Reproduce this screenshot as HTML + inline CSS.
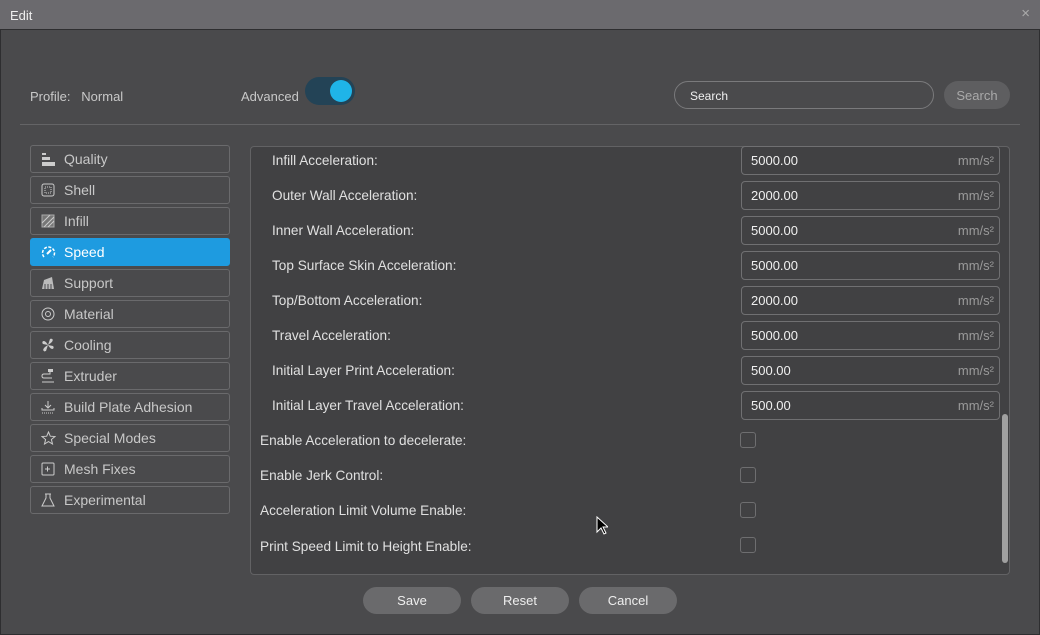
<!DOCTYPE html>
<html><head><style>
*{box-sizing:border-box;margin:0;padding:0}
body{width:1040px;height:635px;background:#4a4a4c;font-family:"Liberation Sans",sans-serif;font-size:13px;color:#d8d8d8;position:relative;overflow:hidden}
.a{position:absolute}
.title{left:0;top:0;width:1040px;height:30px;background:#6b6a6e;border-bottom:1px solid #2e2e30;color:#eee;font-size:13px;padding:8px 10px}
.nav{left:30px;width:200px;height:28px;border:1px solid #6a6a6c;border-radius:3px;color:#c8c8c8;font-size:14px;padding:5px 0 0 33px}
.nav svg{position:absolute;left:10px;top:6px}
.nav.sel{background:#1e9be0;border-color:#1e9be0;color:#fff}
.panel{left:250px;top:146px;width:760px;height:429px;background:#414143;border:1px solid #626264;border-radius:4px}
.lbl{font-size:13.6px;color:#e0e0e0}
.inp{left:741px;width:259px;height:29px;border:1px solid #707072;border-radius:4px;color:#f0f0f0;font-size:13px;padding:6px 9px}
.inp span{position:absolute;right:5px;top:6px;color:#9a9a9a}
.cb{left:740px;width:16px;height:16px;border:1px solid #6e6e70;border-radius:3px}
.btn{top:587px;width:98px;height:27px;border-radius:14px;background:#6a6a6c;color:#eee;text-align:center;padding-top:6px;font-size:13px}
</style></head><body>
<div class="a" style="left:0;top:0;width:1040px;height:635px;border:1px solid #2e2e30;border-top:0"></div>
<div class="a title">Edit<span style="position:absolute;right:10px;top:5px;color:#aaa;font-size:15px">×</span></div>
<div class="a" style="left:30px;top:89px;color:#c8c8c8">Profile:&nbsp;&nbsp; Normal</div>
<div class="a" style="left:241px;top:89px;color:#c8c8c8">Advanced</div>
<div class="a" style="left:305px;top:77px;width:50px;height:28px;border-radius:14px;background:#234356"><div class="a" style="left:25px;top:3px;width:22px;height:22px;border-radius:50%;background:#1fb4e8"></div></div>
<div class="a" style="left:674px;top:81px;width:260px;height:28px;border:1px solid #7a7a7c;border-radius:14px;color:#f0f0f0;padding:7px 15px;font-size:12px">Search</div>
<div class="a" style="left:944px;top:81px;width:66px;height:28px;border-radius:14px;background:#5e5e60;color:#aaa;text-align:center;padding-top:7px">Search</div>
<div class="a" style="left:20px;top:124px;width:1000px;height:1px;background:#646466"></div>

<div class="a nav" style="top:145px"><svg width="14" height="14"><rect x="1" y="1" width="4" height="2" fill="#ccc"/><rect x="1" y="5" width="8" height="3" fill="#ccc"/><rect x="1" y="10" width="13" height="4" fill="#ccc"/></svg>Quality</div>
<div class="a nav" style="top:176px"><svg width="14" height="14"><rect x="1" y="1" width="12" height="12" rx="2" fill="none" stroke="#ccc"/><rect x="4" y="4" width="6" height="6" fill="none" stroke="#ccc" stroke-dasharray="1 1"/></svg>Shell</div>
<div class="a nav" style="top:207px"><svg width="14" height="14"><rect x="1" y="1" width="12" height="12" fill="#777" stroke="#aaa"/><path d="M1 9L9 1M3 13L13 3M7 13L13 7" stroke="#ccc"/></svg>Infill</div>
<div class="a nav sel" style="top:238px"><svg width="15" height="14"><path d="M3 12A6 6 0 1 1 12 12" fill="none" stroke="#fff" stroke-width="1.5" stroke-dasharray="3 1.5"/><path d="M6 9L10 5" stroke="#fff" stroke-width="2"/></svg>Speed</div>
<div class="a nav" style="top:269px"><svg width="14" height="14"><path d="M1 13L3 4L11 1L13 13Z" fill="#bbb"/><path d="M4 13V8M7 13V8M10 13V8" stroke="#4a4a4c"/></svg>Support</div>
<div class="a nav" style="top:300px"><svg width="14" height="14"><circle cx="7" cy="7" r="6" fill="none" stroke="#ccc"/><circle cx="7" cy="7" r="2.5" fill="none" stroke="#ccc"/></svg>Material</div>
<div class="a nav" style="top:331px"><svg width="14" height="14"><path d="M7 7C3 0 0 4 2 6ZM7 7C14 3 12 0 9 1ZM7 7C11 14 14 10 12 8ZM7 7C0 11 2 14 5 13Z" fill="#ccc"/></svg>Cooling</div>
<div class="a nav" style="top:362px"><svg width="14" height="14"><rect x="7" y="0" width="5" height="3" fill="#ccc"/><path d="M9 3V5H3Q1 5 1 7Q1 9 3 9H11M1 13H13" fill="none" stroke="#ccc"/></svg>Extruder</div>
<div class="a nav" style="top:393px"><svg width="14" height="14"><path d="M7 1V8M4 5L7 8L10 5M1 8V10H13V8" fill="none" stroke="#ccc"/><path d="M1 13H13" stroke="#ccc" stroke-dasharray="1 1"/></svg>Build Plate Adhesion</div>
<div class="a nav" style="top:424px"><svg width="15" height="14"><path d="M7.5 1L9.3 5.2L14 5.5L10.4 8.5L11.5 13L7.5 10.6L3.5 13L4.6 8.5L1 5.5L5.7 5.2Z" fill="none" stroke="#ccc"/></svg>Special Modes</div>
<div class="a nav" style="top:455px"><svg width="14" height="14"><rect x="1" y="1" width="12" height="12" rx="1" fill="none" stroke="#ccc"/><path d="M4 7H9M6.5 4.5V9.5" stroke="#ccc"/></svg>Mesh Fixes</div>
<div class="a nav" style="top:486px"><svg width="14" height="14"><path d="M4 1H10M5 1V5L1 13H13L9 5V1" fill="none" stroke="#ccc"/></svg>Experimental</div>

<div class="a panel"></div>
<div class="a lbl" style="left:272px;top:153px">Infill Acceleration:</div>
<div class="a lbl" style="left:272px;top:188px">Outer Wall Acceleration:</div>
<div class="a lbl" style="left:272px;top:223px">Inner Wall Acceleration:</div>
<div class="a lbl" style="left:272px;top:258px">Top Surface Skin Acceleration:</div>
<div class="a lbl" style="left:272px;top:293px">Top/Bottom Acceleration:</div>
<div class="a lbl" style="left:272px;top:328px">Travel Acceleration:</div>
<div class="a lbl" style="left:272px;top:363px">Initial Layer Print Acceleration:</div>
<div class="a lbl" style="left:272px;top:398px">Initial Layer Travel Acceleration:</div>
<div class="a inp" style="top:146px">5000.00<span>mm/s²</span></div>
<div class="a inp" style="top:181px">2000.00<span>mm/s²</span></div>
<div class="a inp" style="top:216px">5000.00<span>mm/s²</span></div>
<div class="a inp" style="top:251px">5000.00<span>mm/s²</span></div>
<div class="a inp" style="top:286px">2000.00<span>mm/s²</span></div>
<div class="a inp" style="top:321px">5000.00<span>mm/s²</span></div>
<div class="a inp" style="top:356px">500.00<span>mm/s²</span></div>
<div class="a inp" style="top:391px">500.00<span>mm/s²</span></div>
<div class="a lbl" style="left:260px;top:433px">Enable Acceleration to decelerate:</div>
<div class="a lbl" style="left:260px;top:468px">Enable Jerk Control:</div>
<div class="a lbl" style="left:260px;top:503px">Acceleration Limit Volume Enable:</div>
<div class="a lbl" style="left:260px;top:539px">Print Speed Limit to Height Enable:</div>
<div class="a cb" style="top:432px"></div>
<div class="a cb" style="top:467px"></div>
<div class="a cb" style="top:502px"></div>
<div class="a cb" style="top:537px"></div>
<div class="a" style="left:1002px;top:414px;width:6px;height:149px;border-radius:3px;background:#a0a0a0"></div>
<svg class="a" style="left:596px;top:516px" width="12" height="20"><path d="M1 1V16L5 12L8 18L10 17L7 11H12Z" fill="#000" stroke="#fff"/></svg>
<div class="a btn" style="left:363px">Save</div>
<div class="a btn" style="left:471px">Reset</div>
<div class="a btn" style="left:579px">Cancel</div>
</body></html>
